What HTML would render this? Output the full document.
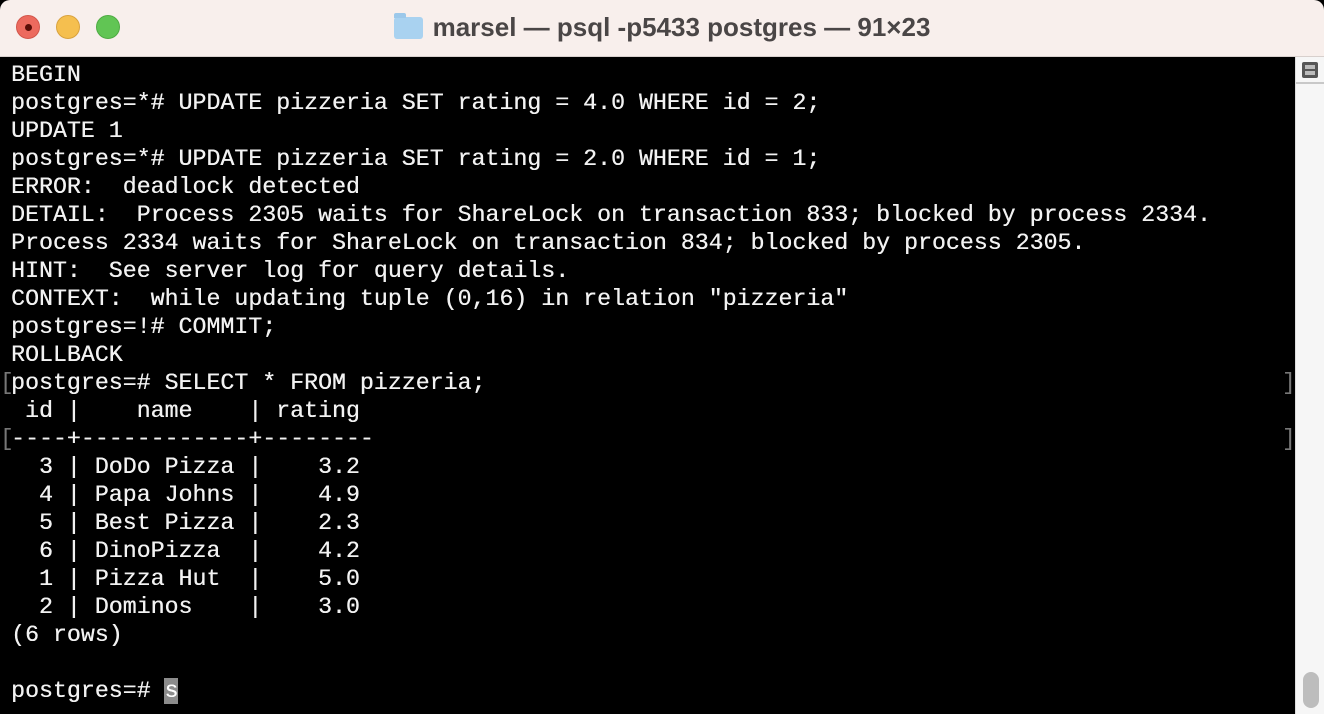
<!DOCTYPE html>
<html><head><meta charset="utf-8"><style>
html,body{margin:0;padding:0;width:1324px;height:714px;overflow:hidden;background:#000}
.win{position:absolute;left:0;top:0;width:1324px;height:714px;background:#000;border-radius:10px 10px 0 0;overflow:hidden}
.tb{position:absolute;left:0;top:0;width:1324px;height:56px;background:#f8efec;border-bottom:1px solid #d8d0cd}
.dot{position:absolute;top:15px;width:24px;height:24px;border-radius:50%}
.title{position:absolute;left:0;width:1324px;top:12px;text-align:center;font:bold 26px "Liberation Sans",sans-serif;color:#4a4646}
.term{position:absolute;left:2px;top:57px;width:1293px;height:657px;background:#000}
pre{position:absolute;left:11px;top:61px;margin:0;font:23.25px/28px "Liberation Mono",monospace;color:#f2f2f2;white-space:pre;text-shadow:0.3px 0 0 #f2f2f2}
.sb{position:absolute;left:1295px;top:57px;width:29px;height:657px;background:#f6f6f6;border-left:1px solid #ddd}
.cur{background:#8c8c8c;color:#fff}
.brk{position:absolute;color:#777;font:23px/28px "Liberation Mono",monospace}
</style></head><body><div class="win">
<div class="tb">
<div class="dot" style="left:16px;background:#ec6a5e;border:1px solid #d2564b;width:22px;height:22px"><div style="position:absolute;left:8px;top:8px;width:7px;height:7px;border-radius:50%;background:#5a0e08"></div></div>
<div class="dot" style="left:56px;background:#f5bf4f;border:1px solid #d9a23e;width:22px;height:22px"></div>
<div class="dot" style="left:96px;background:#61c554;border:1px solid #4fab43;width:22px;height:22px"></div>
<div class="title"><span style="display:inline-block;width:29px;height:22px;background:#a9d2f0;border-radius:3px;vertical-align:-3px;margin-right:10px;position:relative"><span style="position:absolute;left:0;top:-4px;width:12px;height:5px;background:#9cc8ea;border-radius:2px 2px 0 0"></span></span>marsel — psql -p5433 postgres — 91×23</div>
</div>
<div class="term"></div>
<pre>BEGIN
postgres=*# UPDATE pizzeria SET rating = 4.0 WHERE id = 2;
UPDATE 1
postgres=*# UPDATE pizzeria SET rating = 2.0 WHERE id = 1;
ERROR:  deadlock detected
DETAIL:  Process 2305 waits for ShareLock on transaction 833; blocked by process 2334.
Process 2334 waits for ShareLock on transaction 834; blocked by process 2305.
HINT:  See server log for query details.
CONTEXT:  while updating tuple (0,16) in relation "pizzeria"
postgres=!# COMMIT;
ROLLBACK
postgres=# SELECT * FROM pizzeria;
 id |    name    | rating
----+------------+--------
  3 | DoDo Pizza |    3.2
  4 | Papa Johns |    4.9
  5 | Best Pizza |    2.3
  6 | DinoPizza  |    4.2
  1 | Pizza Hut  |    5.0
  2 | Dominos    |    3.0
(6 rows)

postgres=# <span class="cur">s</span></pre>
<div class="brk" style="left:0;top:369px">[</div><div class="brk" style="left:1282px;top:369px">]</div>
<div class="brk" style="left:0;top:425px">[</div><div class="brk" style="left:1282px;top:425px">]</div>
<div class="sb">
<div style="position:absolute;left:6px;top:5px;width:16px;height:16px;background:#555;border-radius:2px"><div style="position:absolute;left:3px;top:3px;width:10px;height:4px;background:#bbb"></div><div style="position:absolute;left:3px;top:9px;width:10px;height:4px;background:#bbb"></div></div>
<div style="position:absolute;left:0;top:25px;width:29px;height:2px;background:#c8c8c8"></div>
<div style="position:absolute;left:7px;top:615px;width:16px;height:36px;background:#bdbdbd;border-radius:8px"></div>
</div>
</div></body></html>
